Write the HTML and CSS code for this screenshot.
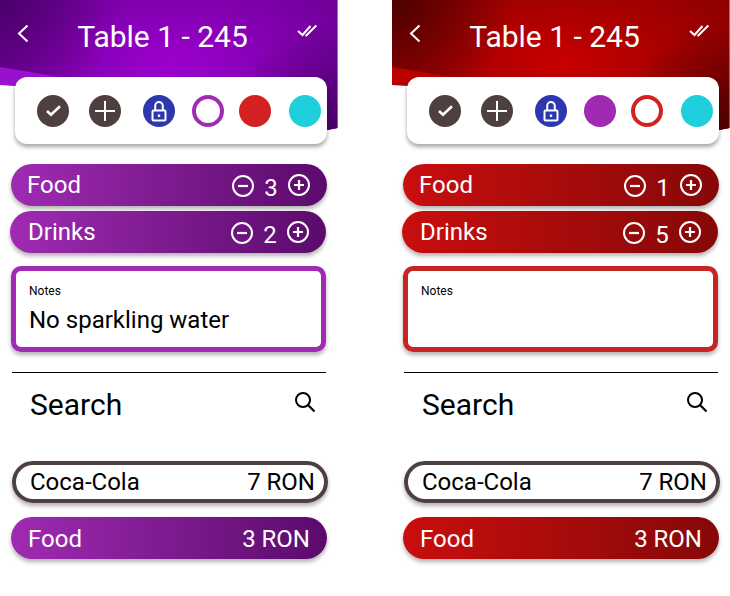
FILE: index.html
```html
<!DOCTYPE html>
<html lang="en">
<head>
  <meta charset="UTF-8">
  <meta name="viewport" content="width=device-width, initial-scale=1.0">
  <title>Table 1 - 245</title>
  <link rel="stylesheet" href="styles.css">
</head>
<body>
  <svg class="sprite" aria-hidden="true">
    <symbol id="i-back" viewBox="0 0 24 24"><path d="M16.500 4.500 8 12.500l8.500 8" fill="none" stroke="currentColor" stroke-width="2"/></symbol>
    <symbol id="i-done" viewBox="0 0 24 24"><path d="M2 12l4.500 4 8-9M9.500 16l.8.500 10-10" fill="none" stroke="currentColor" stroke-width="2"/></symbol>
    <symbol id="i-check" viewBox="0 0 32 32"><path d="M10 16l4 3.800 9-8.500" fill="none" stroke="#fff" stroke-width="2.600"/></symbol>
    <symbol id="i-add" viewBox="0 0 32 32"><path d="M6 16h20M16 6v20" fill="none" stroke="#fff" stroke-width="2"/></symbol>
    <symbol id="i-lock" viewBox="0 0 32 32"><path d="M10.500 15.500h11a1 1 0 0 1 1 1v8a1 1 0 0 1-1 1h-11a1 1 0 0 1-1-1v-8a1 1 0 0 1 1-1zM12.200 15.500v-4.700a3.800 3.800 0 0 1 7.600 0v4.700" fill="none" stroke="#fff" stroke-width="2"/><rect x="14.800" y="19.500" width="2.400" height="2.400" fill="#fff"/></symbol>
    <symbol id="i-minus" viewBox="0 0 24 24"><circle cx="12" cy="12" r="10" fill="none" stroke="currentColor" stroke-width="2"/><path d="M7 12h10" stroke="currentColor" stroke-width="2.200"/></symbol>
    <symbol id="i-plus" viewBox="0 0 24 24"><circle cx="12" cy="12" r="10" fill="none" stroke="currentColor" stroke-width="2"/><path d="M7 12h10M12 7v10" stroke="currentColor" stroke-width="2.200"/></symbol>
    <symbol id="i-search" viewBox="0 0 24 24"><circle cx="10" cy="10" r="7" fill="none" stroke="currentColor" stroke-width="2"/><path d="M15 15l6.500 6.500" stroke="currentColor" stroke-width="2.200"/></symbol>
  </svg>

  <div class="phone purple">
    <div class="hero"><div class="hero-dark"></div></div>
    <div class="topbar">
      <svg class="icon back"><use href="#i-back"/></svg>
      <div class="title">Table 1 - 245</div>
      <svg class="icon done"><use href="#i-done"/></svg>
    </div>
    <div class="card">
      <div class="dot brown d1"><svg><use href="#i-check"/></svg></div>
      <div class="dot brown d2"><svg><use href="#i-add"/></svg></div>
      <div class="dot blue d3"><svg><use href="#i-lock"/></svg></div>
      <div class="dot ring-purple d4"></div>
      <div class="dot fill-red d5"></div>
      <div class="dot teal d6"></div>
    </div>
    <div class="pill food">
      <span>Food</span>
      <div class="counter">
        <svg class="icon minus"><use href="#i-minus"/></svg>
        <span class="count">3</span>
        <svg class="icon"><use href="#i-plus"/></svg>
      </div>
    </div>
    <div class="pill drinks">
      <span>Drinks</span>
      <div class="counter">
        <svg class="icon minus"><use href="#i-minus"/></svg>
        <span class="count">2</span>
        <svg class="icon"><use href="#i-plus"/></svg>
      </div>
    </div>
    <div class="notes">
      <div class="notes-label">Notes</div>
      <div class="notes-text">No sparkling water</div>
    </div>
    <div class="divider"></div>
    <div class="search">
      <span>Search</span>
      <svg class="icon"><use href="#i-search"/></svg>
    </div>
    <div class="item">
      <span>Coca-Cola</span>
      <span>7 RON</span>
    </div>
    <div class="pill total">
      <span>Food</span>
      <span>3 RON</span>
    </div>
  </div>

  <div class="phone red">
    <div class="hero"><div class="hero-dark"></div></div>
    <div class="topbar">
      <svg class="icon back"><use href="#i-back"/></svg>
      <div class="title">Table 1 - 245</div>
      <svg class="icon done"><use href="#i-done"/></svg>
    </div>
    <div class="card">
      <div class="dot brown d1"><svg><use href="#i-check"/></svg></div>
      <div class="dot brown d2"><svg><use href="#i-add"/></svg></div>
      <div class="dot blue d3"><svg><use href="#i-lock"/></svg></div>
      <div class="dot fill-purple d4"></div>
      <div class="dot ring-red d5"></div>
      <div class="dot teal d6"></div>
    </div>
    <div class="pill food">
      <span>Food</span>
      <div class="counter">
        <svg class="icon minus"><use href="#i-minus"/></svg>
        <span class="count">1</span>
        <svg class="icon"><use href="#i-plus"/></svg>
      </div>
    </div>
    <div class="pill drinks">
      <span>Drinks</span>
      <div class="counter">
        <svg class="icon minus"><use href="#i-minus"/></svg>
        <span class="count">5</span>
        <svg class="icon"><use href="#i-plus"/></svg>
      </div>
    </div>
    <div class="notes">
      <div class="notes-label">Notes</div>
      <div class="notes-text"></div>
    </div>
    <div class="divider"></div>
    <div class="search">
      <span>Search</span>
      <svg class="icon"><use href="#i-search"/></svg>
    </div>
    <div class="item">
      <span>Coca-Cola</span>
      <span>7 RON</span>
    </div>
    <div class="pill total">
      <span>Food</span>
      <span>3 RON</span>
    </div>
  </div>
</body>
</html>
```

FILE: styles.css
```css
* {
  box-sizing: border-box;
}
body {
  margin: 0;
  height: 596px;
  overflow: hidden;
  display: flex;
  gap: 54px;
  background: #fff;
  color: #000;
  font-family: 'Roboto', sans-serif;
}
.sprite {
  display: none;
}
.phone {
  position: relative;
  width: 338px;
}
.purple {
  --accent: #9f2bb2;
  --pill-start: #9f2bb2;
  --pill-end: #5b0a6c;
  --hero-mid: #9c00cf;
  --hero-edge: #5c0080;
  --hero-shade: rgba(70,0,100,0.9);
  --hero-clear: rgba(70,0,100,0);
  --hero-band: #9a10cf;
}
.red {
  --accent: #c82424;
  --pill-start: #c90e0e;
  --pill-end: #860808;
  --hero-mid: #c80000;
  --hero-edge: #750000;
  --hero-shade: rgba(70,0,0,0.9);
  --hero-clear: rgba(70,0,0,0);
  --hero-band: #bb0000;
}

/* header background, sits under the bar and the card */
.hero {
  position: absolute;
  top: 0;
  left: 0;
  width: 337.5px;
  height: 131px;
  background: var(--hero-band);
  clip-path: polygon(0 85px, 15px 86px, 327px 130px, 100% 128px, 100% 0, 0 0);
}
.hero-dark {
  height: 100%;
  background:
    radial-gradient(circle 110px at 337px 130px, var(--hero-shade), var(--hero-clear)),
    radial-gradient(circle 120px at 0 0, var(--hero-shade), var(--hero-clear)),
    radial-gradient(ellipse 290px 150px at 172px 64px, var(--hero-mid), var(--hero-edge));
  clip-path: polygon(0 67px, 60px 77px, 327px 130px, 100% 130px, 100% 0, 0 0);
}

.icon {
  width: 24px;
  height: 24px;
  flex: none;
}
.topbar {
  position: relative;
  display: flex;
  align-items: center;
  height: 72px;
  margin-bottom: 5px;
  padding: 0 18px 0 11px;
  color: #fff;
}
.back {
  margin-top: -6px;
}
.done {
  margin-top: -10px;
}
.title {
  flex: 1;
  padding-right: 6px;
  text-align: center;
  font-size: 30px;
}

.card {
  position: relative;
  display: flex;
  align-items: center;
  width: 312px;
  height: 67px;
  margin-left: 15px;
  padding-left: 22px;
  background: #fff;
  border-radius: 12px;
  box-shadow: 0 3px 4px rgba(0,0,0,0.35);
}
.dot {
  width: 32px;
  height: 32px;
  border-radius: 50%;
  flex: none;
}
.dot svg {
  display: block;
  width: 32px;
  height: 32px;
}
.d2 { margin-left: 20px; }
.d3 { margin-left: 22px; }
.d4 { margin-left: 17px; }
.d5 { margin-left: 15px; }
.d6 { margin-left: 18px; }
.brown { background: #4f4040; }
.blue { background: #2d37ae; }
.teal { background: #1fcfdc; }
.fill-red { background: #d32020; }
.fill-purple { background: #9f2bb2; }
.ring-purple { border: 4px solid #9f2bb2; }
.ring-red { border: 4px solid #d32020; }

.pill {
  display: flex;
  align-items: center;
  justify-content: space-between;
  width: 316px;
  height: 42px;
  padding: 0 16px;
  border-radius: 21px;
  background: linear-gradient(90deg, var(--pill-start), var(--pill-end));
  color: #fff;
  font-size: 24px;
  box-shadow: 0 3px 4px rgba(0,0,0,0.3);
}
.food {
  margin: 20px 0 0 11px;
}
.drinks {
  margin: 5px 0 0 10px;
  padding-left: 18px;
}
.counter {
  display: flex;
  align-items: center;
}
.count {
  width: 32px;
  padding-top: 5px;
  text-align: center;
}
.minus {
  margin-top: 2px;
}

.notes {
  width: 315px;
  height: 86px;
  margin: 13px 0 0 11px;
  padding: 13px 13px 0;
  border: 5px solid var(--accent);
  border-radius: 10px;
  box-shadow: 0 3px 4px rgba(0,0,0,0.3);
}
.notes-label {
  font-size: 12px;
  line-height: 14px;
}
.notes-text {
  margin-top: 8px;
  font-size: 24px;
  line-height: 28px;
}
.divider {
  width: 314px;
  height: 1px;
  margin: 20px 0 0 12px;
  background: #000;
}
.search {
  display: flex;
  align-items: center;
  justify-content: space-between;
  height: 62px;
  margin-bottom: 26px;
  padding: 0 21px 0 30px;
  font-size: 30px;
}
.search .icon {
  margin-top: -4px;
}
.item {
  display: flex;
  align-items: center;
  justify-content: space-between;
  width: 316px;
  height: 42px;
  margin-left: 12px;
  padding: 0 9px 0 14px;
  border: 4px solid #4f4040;
  border-radius: 21px;
  font-size: 24px;
  box-shadow: 0 3px 4px rgba(0,0,0,0.3);
}
.total {
  margin: 14px 0 0 11px;
  padding: 2px 17px 0 17px;
}
```
